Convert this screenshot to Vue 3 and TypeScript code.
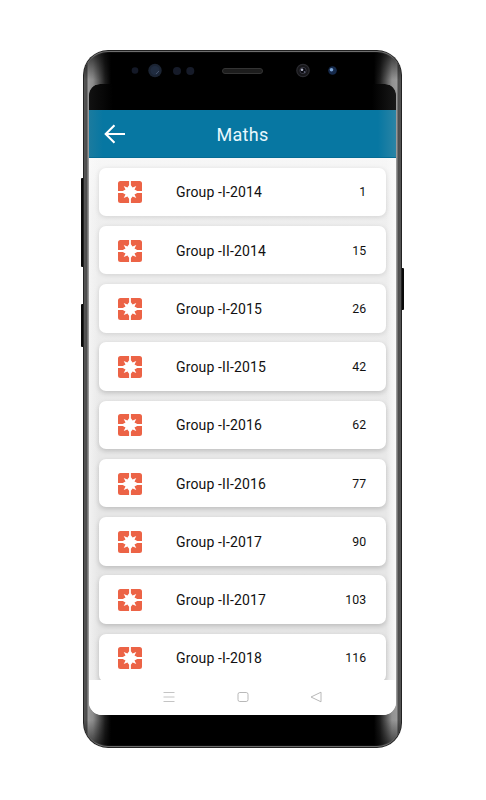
<script setup lang="ts">
interface Paper {
  title: string
  page: number
}

const papers: Paper[] = [
  { title: 'Group -I-2014', page: 1 },
  { title: 'Group -II-2014', page: 15 },
  { title: 'Group -I-2015', page: 26 },
  { title: 'Group -II-2015', page: 42 },
  { title: 'Group -I-2016', page: 62 },
  { title: 'Group -II-2016', page: 77 },
  { title: 'Group -I-2017', page: 90 },
  { title: 'Group -II-2017', page: 103 },
  { title: 'Group -I-2018', page: 116 },
]
</script>

<template>
  <main class="stage">
    <div class="phone">
      <span class="key key-volume"></span>
      <span class="key key-assist"></span>
      <span class="key key-power"></span>
      <div class="body">
        <div class="bezel">
          <svg class="sensors" width="307" height="32" viewBox="0 0 307 32">
            <circle cx="46" cy="18.5" r="3.3" fill="#141927" />
            <circle cx="66" cy="18.5" r="6.7" fill="#1b2433" />
            <circle cx="66" cy="18.5" r="4.5" fill="#202c40" />
            <path d="M67 22l3-3" stroke="#45536a" stroke-width="1" />
            <circle cx="88" cy="19" r="4" fill="#161b29" />
            <circle cx="101.3" cy="19" r="4" fill="#161b29" />
            <rect x="133.5" y="16.5" width="40" height="5" rx="2.5" fill="#1d1d1d" stroke="#343434" />
            <circle cx="214" cy="18.5" r="6.2" fill="#161619" stroke="#2b2b30" stroke-width="1.2" />
            <circle cx="214" cy="18.5" r="3.2" fill="#08080e" stroke="#3d3d4a" stroke-width=".8" />
            <circle cx="213" cy="17.8" r="1.3" fill="#b3b6c9" />
            <circle cx="215.5" cy="20" r=".8" fill="#787d96" />
            <circle cx="243.5" cy="18.5" r="4.3" fill="#15294a" />
            <circle cx="242.5" cy="17.7" r="1.8" fill="#7ba4d6" />
          </svg>
        </div>

        <div class="screen">
          <div class="status"></div>
          <header class="appbar">
            <svg class="back" width="22" height="20" viewBox="0 0 22 20">
              <path d="M21 10H2M10.500 1.200L1.700 10l8.800 8.800" fill="none" stroke="#fff" stroke-width="2.100" />
            </svg>
            <h1>Maths</h1>
          </header>

          <div class="list">
            <div v-for="paper in papers" :key="paper.title" class="card">
              <svg class="badge" width="24" height="22" viewBox="-12 -11 24 22">
                <g fill="#ec6346">
                  <path d="M-.9-11H-9.500Q-12-11-12-8.500V-.9H-7.200L-4.500-2.400-6.300-6-2.600-4.600-.9-6.800Z" />
                  <path d="M.9-11H9.500Q12-11 12-8.500V-.9H7.200L4.500-2.400 6.300-6 2.600-4.600.9-6.800Z" />
                  <path d="M-.9 11H-9.500Q-12 11-12 8.500V.9H-7.200L-4.500 2.400-6.300 6-2.600 4.600-.9 6.800Z" />
                  <path d="M.9 11H9.500Q12 11 12 8.500V.9H7.200L4.500 2.400 6.300 6 2.600 4.600.9 6.800Z" />
                </g>
              </svg>
              <span class="title">{{ paper.title }}</span>
              <span class="page">{{ paper.page }}</span>
            </div>
          </div>

          <nav class="navbar">
            <svg width="12" height="12" viewBox="0 0 12 12">
              <path d="M.5 1.500h11M.5 6h11M.5 10.500h11" stroke="#c4c4c4" />
            </svg>
            <svg width="12" height="12" viewBox="0 0 12 12">
              <rect x="1" y="1.500" width="10" height="9" rx="1.800" fill="none" stroke="#b8b8b8" />
            </svg>
            <svg width="12" height="12" viewBox="0 0 12 12">
              <path d="M11 1.200v9.600L1 6z" fill="none" stroke="#b8b8b8" stroke-linejoin="round" />
            </svg>
          </nav>
        </div>
      </div>
    </div>
  </main>
</template>

<style>
body {
  background: #fff;
}
</style>

<style scoped>
.stage {
  box-sizing: border-box;
  width: 486px;
  height: 800px;
  padding: 50px 0 0 83px;
  overflow: hidden;
  background: #fff;
  font-family: Roboto, "Liberation Sans", sans-serif;
}

.phone {
  position: relative;
  width: 319px;
  height: 698px;
}

.key {
  position: absolute;
  width: 4px;
  border-radius: 1px;
  background: #090909;
}

.key-volume {
  left: -2px;
  top: 128px;
  height: 89px;
}

.key-assist {
  left: -2px;
  top: 254px;
  height: 43px;
}

.key-power {
  right: -2px;
  top: 218px;
  height: 42px;
}

.body {
  position: relative;
  box-sizing: border-box;
  height: 100%;
  padding: 2px 6px;
  border-radius: 25px;
  background:
    linear-gradient(rgba(0, 0, 0, 0.75), rgba(0, 0, 0, 0) 30px, rgba(0, 0, 0, 0) 670px, rgba(0, 0, 0, 0.65)),
    linear-gradient(90deg, #222 0, #555 1px, #4c4c4c 4px, #9a9a9a 5px, #8c8c8c 10px, #555 16px, #1d1d1d 22px, #000 28px, #000 291px, #1d1d1d 297px, #555 303px, #929292 309px, #9a9a9a 314px, #4c4c4c 315px, #555 318px, #222 319px);
  box-shadow: inset 0 0 0 1px #222, inset 0 2px 1px #7c7c7c, inset 0 -2px 1px #777;
}

.bezel {
  height: 32px;
}

.sensors {
  display: block;
}

.screen {
  display: flex;
  flex-direction: column;
  height: 631px;
  overflow: hidden;
  border-radius: 11px 11px 13px 13px;
  background: #fff;
}

.status {
  flex: none;
  height: 26px;
  background: linear-gradient(90deg, #111, #000 24px, #000 283px, #181818);
}

.appbar {
  display: grid;
  flex: none;
  grid-template-columns: 22px 1fr 22px;
  align-items: center;
  box-sizing: border-box;
  height: 48px;
  padding: 0 15px;
  background: linear-gradient(90deg, #1b7b9f, #0777a2 14px, #0777a2 289px, #2b84a5);
  box-shadow: inset 0 -1px #066c94;
}

.back {
  display: block;
}

h1 {
  margin: 0;
  padding-top: 1px;
  color: #e9f8fd;
  font-size: 18px;
  font-weight: 400;
  letter-spacing: 0.3px;
  line-height: 24px;
  text-align: center;
}

.list {
  display: flex;
  flex: 1;
  flex-direction: column;
  gap: 9.750px;
  min-height: 0;
  overflow: hidden;
  padding: 9.700px 10px 0;
  background:
    linear-gradient(90deg, rgba(252, 252, 252, 0.5), rgba(252, 252, 252, 0) 10px, rgba(252, 252, 252, 0) 297px, #fafafa 307px),
    linear-gradient(#f7f7f7, #efefef 50px, #e8e8e8 300px, #e4e4e4);
}

.card {
  display: flex;
  flex: none;
  align-items: center;
  box-sizing: border-box;
  height: 48.500px;
  padding: 1px 19.800px 0 19px;
  border-radius: 7px;
  background: #fff;
  box-shadow: 0 1px 5px rgba(0, 0, 0, 0.12);
  color: #111;
}

.card:nth-child(n + 4) {
  box-shadow: 0 2px 5px rgba(0, 0, 0, 0.18);
}

.badge {
  flex: none;
}

.title {
  flex: 1;
  margin-left: 34px;
  font-size: 14px;
  letter-spacing: 0.14px;
  line-height: 18px;
}

.page {
  font-size: 12.300px;
  letter-spacing: 0.1px;
  line-height: 18px;
}

.navbar {
  display: flex;
  flex: none;
  align-items: center;
  justify-content: space-between;
  height: 35.500px;
  padding: 0 74px;
  background: #fff;
}
</style>
